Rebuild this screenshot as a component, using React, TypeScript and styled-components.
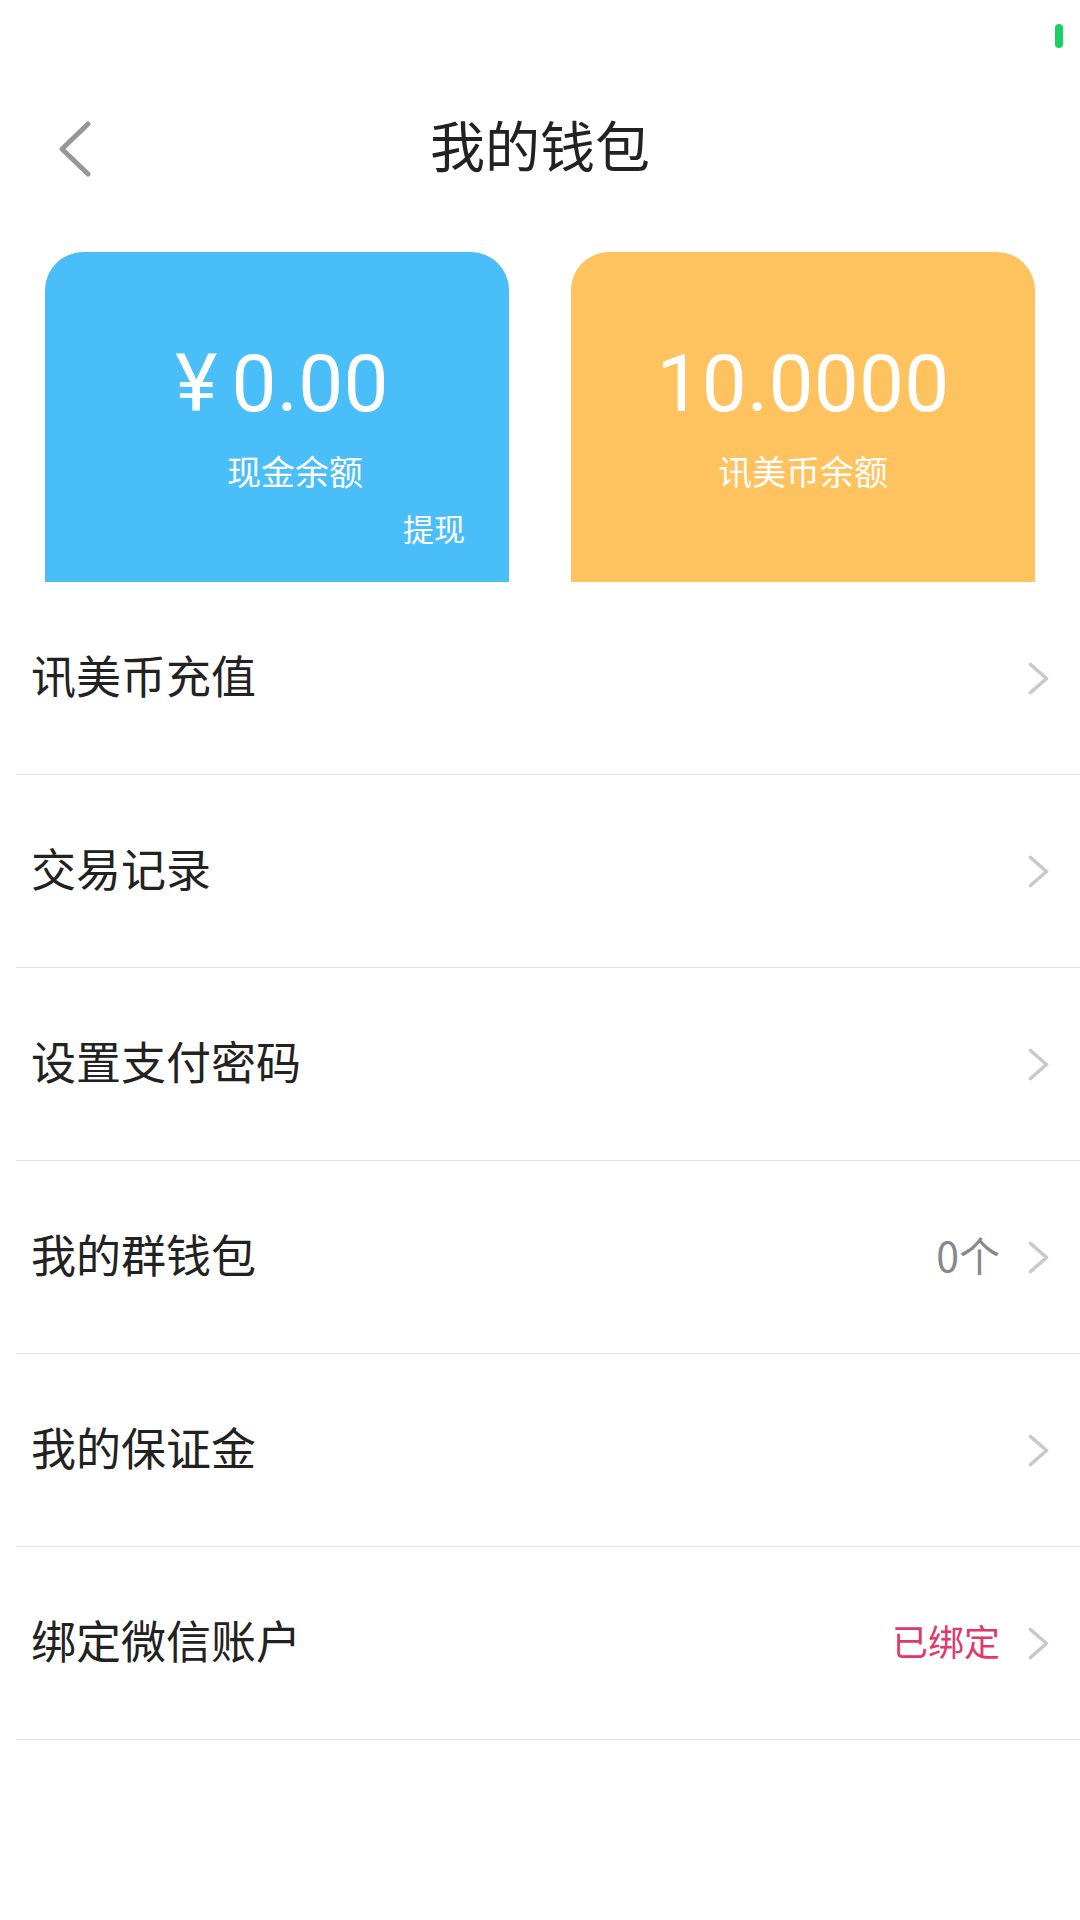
import styled, { createGlobalStyle } from 'styled-components';

const GlobalStyle = createGlobalStyle`
  html, body {
    margin: 0;
    padding: 0;
    background: #ffffff;
  }
  body {
    font-family: "Noto Sans CJK SC", "Noto Sans", sans-serif;
  }
`;

const Page = styled.div`
  width: 1080px;
  min-height: 1920px;
  background: #ffffff;
  display: flex;
  flex-direction: column;
`;

const StatusBar = styled.div`
  height: 72px;
  display: flex;
  justify-content: flex-end;
  align-items: flex-start;
  padding: 24px 17px 0 0;
  box-sizing: border-box;
`;

const SignalPill = styled.span`
  width: 8px;
  height: 24px;
  border-radius: 4px;
  background: #1bcf64;
`;

const Header = styled.header`
  height: 150px;
  display: grid;
  grid-template-columns: 1fr auto 1fr;
  align-items: center;
`;

const BackButton = styled.button`
  justify-self: start;
  border: none;
  background: none;
  padding: 4px 0 0 58px;
  display: flex;
  align-items: center;
  cursor: pointer;
`;

const Title = styled.h1`
  margin: 0 0 8px;
  font-size: 55px;
  font-weight: 400;
  line-height: 1;
  color: #222222;
`;

const Cards = styled.section`
  display: grid;
  grid-template-columns: 1fr 1fr;
  gap: 62px;
  padding: 30px 45px 0;
`;

const Card = styled.div<{ $bg: string }>`
  height: 330px;
  background: ${(p) => p.$bg};
  border-radius: 38px 38px 0 0;
  display: flex;
  flex-direction: column;
  align-items: center;
  padding-top: 92px;
  box-sizing: border-box;
  color: #ffffff;
`;

const Amount = styled.div<{ $shift?: number }>`
  padding-left: ${(p) => p.$shift ?? 0}px;
  font-family: Roboto, "Liberation Sans", sans-serif;
  font-size: 80px;
  line-height: 1;
  letter-spacing: 0.3px;
`;

const Currency = styled.span`
  margin-right: 14px;
`;

const CardLabel = styled.div<{ $shift?: number }>`
  margin-top: 30px;
  padding-left: ${(p) => p.$shift ?? 0}px;
  font-size: 34px;
  line-height: 1;
`;

const CardAction = styled.div`
  align-self: flex-end;
  margin: 24px 44px 0 0;
  font-size: 31px;
  line-height: 1;
`;

const List = styled.ul`
  list-style: none;
  margin: 0;
  padding: 0;
`;

const Row = styled.li`
  height: 193px;
  margin-left: 16px;
  padding: 0 31px 7px 15px;
  box-sizing: border-box;
  border-bottom: 1px solid #e3e3e3;
  display: flex;
  align-items: center;
`;

const RowLabel = styled.span`
  flex: 1;
  font-size: 45px;
  color: #222222;
`;

const RowValue = styled.span<{ $tone: 'muted' | 'accent' }>`
  margin-right: 28px;
  font-size: ${(p) => (p.$tone === 'accent' ? 36 : 41)}px;
  color: ${(p) => (p.$tone === 'accent' ? '#e2376d' : '#888888')};
`;

const ChevronBox = styled.span`
  display: flex;
  margin-top: 7px;
`;

function BackIcon() {
  return (
    <svg width="34" height="56" viewBox="0 0 34 56">
      <polyline
        points="30,3 4,28 30,53"
        fill="none"
        stroke="#979797"
        strokeWidth="5"
        strokeLinecap="round"
        strokeLinejoin="round"
      />
    </svg>
  );
}

function Chevron() {
  return (
    <ChevronBox>
      <svg width="21" height="33" viewBox="0 0 21 33">
        <polyline
          points="2.5,2.5 18.5,16.5 2.5,30.5"
          fill="none"
          stroke="#c9c9c9"
          strokeWidth="3.6"
          strokeLinecap="round"
          strokeLinejoin="round"
        />
      </svg>
    </ChevronBox>
  );
}

const rows: { label: string; value?: string; tone?: 'muted' | 'accent' }[] = [
  { label: '讯美币充值' },
  { label: '交易记录' },
  { label: '设置支付密码' },
  { label: '我的群钱包', value: '0个', tone: 'muted' },
  { label: '我的保证金' },
  { label: '绑定微信账户', value: '已绑定', tone: 'accent' },
];

export default function App() {
  return (
    <Page>
      <GlobalStyle />
      <StatusBar>
        <SignalPill />
      </StatusBar>
      <Header>
        <BackButton aria-label="返回">
          <BackIcon />
        </BackButton>
        <Title>我的钱包</Title>
        <span />
      </Header>
      <Cards>
        <Card $bg="#4abef8">
          <Amount $shift={10}>
            <Currency>¥</Currency>0.00
          </Amount>
          <CardLabel $shift={36}>现金余额</CardLabel>
          <CardAction>提现</CardAction>
        </Card>
        <Card $bg="#fec35e">
          <Amount>10.0000</Amount>
          <CardLabel>讯美币余额</CardLabel>
        </Card>
      </Cards>
      <List>
        {rows.map((r) => (
          <Row key={r.label}>
            <RowLabel>{r.label}</RowLabel>
            {r.value && <RowValue $tone={r.tone ?? 'muted'}>{r.value}</RowValue>}
            <Chevron />
          </Row>
        ))}
      </List>
    </Page>
  );
}
